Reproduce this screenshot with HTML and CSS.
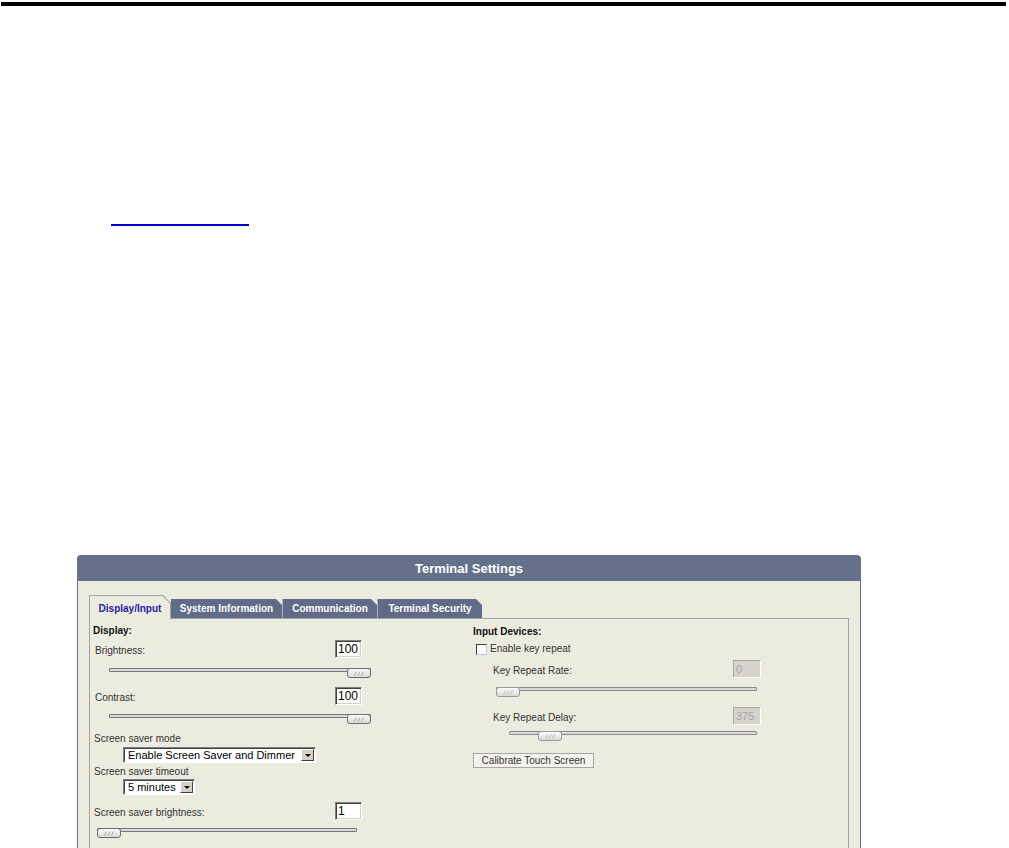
FILE: index.html
```html
<!DOCTYPE html>
<html lang="en">
<head>
  <meta charset="UTF-8" />
  <title>Terminal Settings</title>
  <link rel="stylesheet" href="styles.css">
</head>
<body>
  <div class="topbar"></div>
  <div class="link-line"></div>

  <div class="panel">
    <div class="panel-header">Terminal Settings</div>
    <div class="panel-body">

      <!-- Tabs -->
      <div class="tabs">
        <div class="tab tab-active"><span>Display/Input</span></div>
        <div class="tab tab-sys">System Information</div>
        <div class="tab tab-comm">Communication</div>
        <div class="tab tab-sec">Terminal Security</div>
      </div>

      <div class="tab-panel">
        <div class="col col-left">
          <div class="heading">Display:</div>

          <div class="row row-bright">
            <span class="label">Brightness:</span>
            <div class="num">100</div>
          </div>
          <div class="slider slider-bright">
            <div class="track"></div>
            <div class="thumb" style="--pos: 1"><svg width="10" height="5" viewBox="0 0 10 5"><path d="M0.5 4.5L2.5 0.5M4 4.5L6 0.5M7.5 4.5L9.5 0.5" stroke="#a8a8a8" stroke-width="1" fill="none"/></svg></div>
          </div>

          <div class="row row-contrast">
            <span class="label">Contrast:</span>
            <div class="num">100</div>
          </div>
          <div class="slider slider-contrast">
            <div class="track"></div>
            <div class="thumb" style="--pos: 1"><svg width="10" height="5" viewBox="0 0 10 5"><path d="M0.5 4.5L2.5 0.5M4 4.5L6 0.5M7.5 4.5L9.5 0.5" stroke="#a8a8a8" stroke-width="1" fill="none"/></svg></div>
          </div>

          <div class="label label-mode">Screen saver mode</div>
          <div class="select select-mode">
            <span class="select-text">Enable Screen Saver and Dimmer</span>
            <span class="select-btn"><i class="arrow"></i></span>
          </div>

          <div class="label label-timeout">Screen saver timeout</div>
          <div class="select select-timeout">
            <span class="select-text">5 minutes</span>
            <span class="select-btn"><i class="arrow"></i></span>
          </div>

          <div class="row row-ssb">
            <span class="label">Screen saver brightness:</span>
            <div class="num">1</div>
          </div>
          <div class="slider slider-ssb">
            <div class="track"></div>
            <div class="thumb" style="--pos: 0"><svg width="10" height="5" viewBox="0 0 10 5"><path d="M0.5 4.5L2.5 0.5M4 4.5L6 0.5M7.5 4.5L9.5 0.5" stroke="#a8a8a8" stroke-width="1" fill="none"/></svg></div>
          </div>
        </div>

        <div class="col col-right">
          <div class="heading">Input Devices:</div>

          <div class="check-row">
            <span class="checkbox"></span>
            <span class="label">Enable key repeat</span>
          </div>

          <div class="row row-rate">
            <span class="label">Key Repeat Rate:</span>
            <div class="num num-disabled">0</div>
          </div>
          <div class="slider slider-rate">
            <div class="track"></div>
            <div class="thumb" style="--pos: 0"><svg width="10" height="5" viewBox="0 0 10 5"><path d="M0.5 4.5L2.5 0.5M4 4.5L6 0.5M7.5 4.5L9.5 0.5" stroke="#b8b8b8" stroke-width="1" fill="none"/></svg></div>
          </div>

          <div class="row row-delay">
            <span class="label">Key Repeat Delay:</span>
            <div class="num num-disabled">375</div>
          </div>
          <div class="slider slider-delay">
            <div class="track"></div>
            <div class="thumb" style="--pos: 0.13"><svg width="10" height="5" viewBox="0 0 10 5"><path d="M0.5 4.5L2.5 0.5M4 4.5L6 0.5M7.5 4.5L9.5 0.5" stroke="#b8b8b8" stroke-width="1" fill="none"/></svg></div>
          </div>

          <button class="calibrate-btn">Calibrate Touch Screen</button>
        </div>
      </div>

    </div>
  </div>
</body>
</html>
```

FILE: styles.css
```css
body {
  margin: 0;
  background: #ffffff;
  font-family: 'Liberation Sans', Arial, sans-serif;
  color: #222;
}

.topbar {
  margin: 2px 0 0 1px;
  width: 1005px;
  height: 4px;
  background: #000;
}

.link-line {
  margin: 218px 0 0 111px;
  width: 138px;
  height: 2px;
  background: #0000cc;
}

/* Panel */
.panel {
  margin: 329px 0 0 77px;
  width: 784px;
  box-sizing: border-box;
  border: 1px solid #65718b;
  border-bottom: none;
  border-radius: 4px 4px 0 0;
  background: #ecebe0;
}

.panel-header {
  height: 25px;
  line-height: 25px;
  background: #65718b;
  color: #fff;
  font-size: 13px;
  font-weight: bold;
  text-align: center;
}

.panel-body {
  padding: 14px 11px 0 11px;
}

/* Tabs */
.tabs {
  display: flex;
  align-items: flex-end;
  height: 23px;
}

.tab {
  box-sizing: border-box;
  height: 19px;
  display: flex;
  align-items: center;
  justify-content: center;
  font-size: 10px;
  font-weight: bold;
  color: #fff;
  background: #5f6b88;
  clip-path: polygon(0 0, calc(100% - 6px) 0, 100% 6px, 100% 100%, 0 100%);
}

.tab-active {
  position: relative;
  z-index: 1;
  width: 82px;
  height: 24px;
  margin-bottom: -1px;
  padding: 1px 1px 0 1px;
  background: #a3a3a3;
  clip-path: polygon(0 0, calc(100% - 8px) 0, 100% 8px, 100% 100%, 0 100%);
}

.tab-active span {
  width: 100%;
  height: 100%;
  display: flex;
  align-items: center;
  justify-content: center;
  padding-top: 1px;
  box-sizing: border-box;
  background: #ecebe0;
  color: #2323a8;
  clip-path: polygon(0 0, calc(100% - 7.6px) 0, 100% 7.6px, 100% 100%, 0 100%);
}

.tab-sys {
  width: 111px;
}

.tab-comm {
  width: 95px;
  border-left: 1px solid #aab1c1;
}

.tab-sec {
  width: 105px;
  border-left: 1px solid #aab1c1;
}

.tab-panel {
  display: grid;
  grid-template-columns: 380px 1fr;
  border: 1px solid #a3a3a3;
  border-bottom: none;
  padding: 6px 0 40px 3px;
}

.heading {
  font-size: 10px;
  font-weight: bold;
  line-height: 12px;
  color: #111;
}

.col-right .heading {
  margin-top: 1px;
}

.label {
  font-size: 10px;
  line-height: 12px;
  color: #333;
}

.row {
  display: flex;
  justify-content: space-between;
  align-items: flex-end;
}

.row .label {
  margin-bottom: 1px;
}

.row-bright {
  margin-top: 3px;
  width: 269px;
  padding-left: 2px;
  box-sizing: border-box;
}

.row-contrast {
  margin-top: 9px;
  width: 269px;
  padding-left: 2px;
  box-sizing: border-box;
}

.row-ssb {
  margin-top: 7px;
  width: 269px;
  padding-left: 1px;
  box-sizing: border-box;
}

.row-rate {
  margin: 5px 0 0 20px;
  width: 268px;
}

.row-delay {
  margin: 10px 0 0 20px;
  width: 268px;
}

/* Number inputs */
.num {
  box-sizing: border-box;
  width: 27px;
  height: 18px;
  padding-left: 2px;
  background: #fff;
  border: 1px solid;
  border-color: #808080 #fff #fff #808080;
  box-shadow: inset 1px 1px 0 #404040, inset -1px -1px 0 #d4d0c8;
  font-size: 12px;
  line-height: 16px;
  color: #000;
}

.num-disabled {
  width: 28px;
  font-size: 11px;
  background: #d6d3cc;
  color: #a2a2a2;
  border-color: #a8a8a8 #fff #fff #a8a8a8;
  box-shadow: none;
}

/* Sliders */
.slider {
  position: relative;
  height: 10px;
}

.track {
  box-sizing: border-box;
  height: 4px;
  margin-top: 3px;
  border: 1px solid #777;
  border-radius: 1px;
  background: #d9d9d9;
}

.thumb {
  position: absolute;
  top: 0;
  left: calc((100% - 24px) * var(--pos));
  box-sizing: border-box;
  width: 24px;
  height: 10px;
  border: 1px solid #6e6e6e;
  border-radius: 3px;
  background: linear-gradient(#fbfbfb, #dadada);
  display: flex;
  align-items: center;
  justify-content: center;
}

.col-right .thumb {
  border-color: #9a9a9a;
}

.col-right .track {
  border-color: #8a8a8a;
}

.slider-bright {
  margin: 10px 0 0 16px;
  width: 262px;
}

.slider-contrast {
  margin: 9px 0 0 16px;
  width: 262px;
}

.slider-ssb {
  margin: 8px 0 0 4px;
  width: 260px;
}

.slider-rate {
  margin: 9px 0 0 23px;
  width: 261px;
}

.slider-delay {
  margin: 6px 0 0 36px;
  width: 248px;
}

/* Selects */
.label-mode {
  margin: 9px 0 0 1px;
}

.label-timeout {
  margin: 3px 0 0 1px;
}

.select {
  display: flex;
  box-sizing: border-box;
  height: 16px;
  margin-left: 30px;
  background: #fff;
  border: 1px solid;
  border-color: #808080 #fff #fff #808080;
  box-shadow: inset 1px 1px 0 #404040;
}

.select-mode {
  width: 193px;
  margin-top: 2px;
}

.select-timeout {
  width: 72px;
  margin-top: 1px;
}

.select-text {
  flex: 1;
  padding: 1px 0 0 4px;
  font-size: 11px;
  line-height: 13px;
  color: #000;
  white-space: nowrap;
}

.select-btn {
  box-sizing: border-box;
  width: 13px;
  margin: 1px 1px 1px 0;
  background: #d4d0c8;
  border: 1px solid;
  border-color: #fff #404040 #404040 #fff;
  display: flex;
  align-items: center;
  justify-content: center;
}

.arrow {
  width: 0;
  height: 0;
  border-left: 3px solid transparent;
  border-right: 3px solid transparent;
  border-top: 3px solid #000;
}

/* Checkbox */
.check-row {
  display: flex;
  align-items: center;
  margin: 5px 0 0 3px;
  gap: 3px;
}

.checkbox {
  box-sizing: border-box;
  width: 11px;
  height: 11px;
  background: #fff;
  border: 1px solid;
  border-color: #404040 #c8c8c8 #c8c8c8 #404040;
}

.calibrate-btn {
  margin-top: 12px;
  width: 121px;
  height: 15px;
  padding: 0;
  box-sizing: border-box;
  border: 1px solid #a6a6a6;
  background: #f3f2ec;
  font-family: 'Liberation Sans', Arial, sans-serif;
  font-size: 10px;
  color: #333;
  cursor: pointer;
}
```
